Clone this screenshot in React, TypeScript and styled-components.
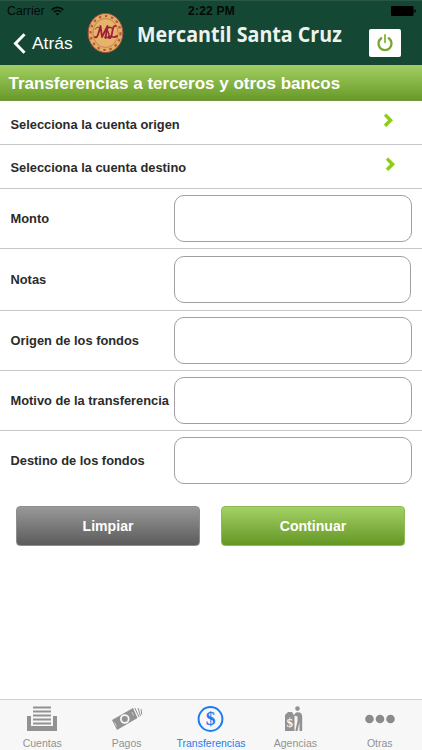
import React from 'react';
import styled, { createGlobalStyle } from 'styled-components';

const Global = createGlobalStyle`
  * { box-sizing: border-box; }
  html, body { margin: 0; padding: 0; background: #fff; }
  body { font-family: "Liberation Sans", Arial, sans-serif; color: #2b2b2b; }
  svg { display: block; flex: none; }
  button, input { font-family: inherit; margin: 0; }
`;

const Screen = styled.div`
  width: 422px;
  height: 750px;
  display: flex;
  flex-direction: column;
  overflow: hidden;
  background: #fff;
`;

const Header = styled.header`
  height: 65px;
  background: #144734;
  border-top: 1px solid #2a5646;
  flex: none;
`;

const StatusBar = styled.div`
  height: 20px;
  display: grid;
  grid-template-columns: 1fr auto 1fr;
  align-items: center;
  padding: 0 6px 0 7px;
  color: #030907;
  font-size: 12.3px;
  line-height: 20px;
`;

const Carrier = styled.div`
  display: flex;
  align-items: center;
  gap: 6px;
`;

const Clock = styled.div`
  font-weight: 700;
  font-size: 12px;
  letter-spacing: 0.2px;
`;

const BatterySlot = styled.div`
  justify-self: end;
`;

const NavBar = styled.div`
  height: 44px;
  display: flex;
  align-items: center;
  padding-left: 13px;
`;

const BackButton = styled.button`
  display: flex;
  align-items: center;
  gap: 6px;
  width: 74px;
  padding: 0;
  border: 0;
  background: none;
  color: #fff;
  font-size: 17.4px;
  line-height: 22px;
`;

const Brand = styled.div`
  display: flex;
  align-items: center;
  width: 282px;
  gap: 12px;
  margin-top: -20px;
`;

const BrandName = styled.div`
  font-family: "Open Sans", "Noto Sans", sans-serif;
  font-weight: 700;
  font-size: 22px;
  line-height: 30px;
  color: #eef2ef;
  white-space: nowrap;
  transform: scaleX(0.894);
  transform-origin: 0 50%;
`;

const PowerButton = styled.button`
  width: 32px;
  height: 28px;
  display: grid;
  place-items: center;
  padding: 0;
  border: 0;
  border-radius: 2px;
  background: #fff;
`;

const Title = styled.h1`
  margin: 0;
  height: 36px;
  flex: none;
  padding-left: 8.5px;
  font-size: 17px;
  line-height: 38px;
  font-weight: 700;
  color: #fff;
  white-space: nowrap;
  border-bottom: 1px solid #75963f;
  background: linear-gradient(#a2cf62, #689a29);
`;

const Row = styled.div<{ $h: number; $pad?: number; $last?: boolean }>`
  height: ${(p) => p.$h}px;
  flex: none;
  display: flex;
  align-items: flex-start;
  padding: ${(p) => p.$pad ?? 6}px 10px 0;
  border-bottom: 1px solid ${(p) => (p.$last ? 'transparent' : '#c6c6c6')};
`;

const Label = styled.label<{ $top: number }>`
  width: 164px;
  flex: none;
  padding-top: ${(p) => p.$top}px;
  padding-left: 0.5px;
  font-size: 12.85px;
  line-height: 16px;
  font-weight: 700;
  white-space: nowrap;
`;

const Field = styled.input<{ $w?: number }>`
  width: ${(p) => p.$w ?? 238}px;
  height: 47px;
  flex: none;
  border: 1px solid #a0a0a0;
  border-radius: 10px;
  background: #fff;
  outline: none;
`;

const Chevron = styled.svg<{ $right: number }>`
  margin-left: auto;
  margin-right: ${(p) => p.$right}px;
`;

const Actions = styled.div`
  display: flex;
  gap: 21px;
  padding: 15px 16px 0;
`;

const ActionButton = styled.button<{ $primary?: boolean }>`
  width: 184px;
  height: 40px;
  padding: 0;
  border-radius: 4px;
  border: 1px solid ${(p) => (p.$primary ? '#8dba52' : '#8e8e8e')};
  background: ${(p) =>
    p.$primary ? 'linear-gradient(#a6d268, #629522)' : 'linear-gradient(#9a9a9a, #5a5a5a)'};
  background-origin: border-box;
  color: #fff;
  font-size: 14.1px;
  font-weight: 700;
`;

const TabBar = styled.nav`
  margin-top: auto;
  height: 51px;
  flex: none;
  display: grid;
  grid-template-columns: repeat(5, 1fr);
  border-top: 1px solid #d2d2d2;
  background: #f7f7f7;
`;

const Tab = styled.div<{ $active?: boolean }>`
  display: flex;
  flex-direction: column;
  align-items: center;
  padding-top: 5px;
  gap: 4px;
  color: ${(p) => (p.$active ? '#1b7df0' : '#929292')};
  font-size: 10.5px;
  line-height: 14px;
  white-space: nowrap;
`;

const Seal = () => (
  <svg width="38" height="42" viewBox="0 0 38 42">
    <ellipse cx="18.5" cy="21" rx="17.4" ry="19.6" fill="#e3ad64" stroke="#a24a3c" strokeWidth="1" />
    <ellipse cx="18.5" cy="21" rx="15" ry="17" fill="none" stroke="#b4573f" strokeWidth="2.2" strokeDasharray="2.4 3.8" />
    <ellipse cx="18.5" cy="21" rx="12.6" ry="14.5" fill="#e6b36b" stroke="#bd6c4c" strokeWidth=".7" />
    <g fill="none" stroke="#9b2038" strokeWidth="1.8" strokeLinecap="round" strokeLinejoin="round">
      <path d="M8 25c2 2 3.5-3 5.5-11l1.5 11 5.5-11-2 12" />
      <path d="M24.5 16c-3-2.5-5.5 1-3.5 4s1 7-3 5" strokeWidth="1.5" />
      <path d="M29 14c-4-1-3 6-5 11-1 2-3 1-2 0 2-2 5 2 8-1" />
      <path d="M8.500 17c1.500-3 3.500-2 4.500 0" strokeWidth="1" />
    </g>
  </svg>
);

const WifiIcon = () => (
  <svg width="13" height="10" viewBox="0 0 13 10" fill="none" stroke="#030907" strokeWidth="1.7">
    <path d="M.8 3.8C4 .5 9 .5 12.2 3.8" />
    <path d="M3 6c2-2 5-2 7 0" />
    <path d="M6.5 9.6 4.7 7.7q1.8-1.5 3.600 0z" fill="#030907" stroke="none" />
  </svg>
);

const BatteryIcon = () => (
  <svg width="25" height="10" viewBox="0 0 25 10">
    <rect width="22.500" height="10" rx="1" />
    <path d="M23.300 3.300q1.500.2 1.500 1.700t-1.500 1.700z" />
  </svg>
);

const PowerIcon = () => (
  <svg width="18" height="20" viewBox="0 0 18 20" fill="none" stroke="#78a62f" strokeLinecap="round">
    <path d="M5.2 5.3a6.5 6.5 0 1 0 7.6 0" strokeWidth="2.3" />
    <path d="M9 2v7.2" strokeWidth="2" stroke="#8ebd48" />
  </svg>
);

const Arrow = ({ right }: { right: number }) => (
  <Chevron $right={right} width="11" height="15" viewBox="0 0 11 15">
    <path d="M2 1.600 7.600 7.200 2 12.800" fill="none" stroke="#8dcc17" strokeWidth="3.400" />
  </Chevron>
);

const AccountsIcon = () => (
  <svg width="30" height="27" viewBox="0 0 30 27" fill="#929292">
    <path d="M0 11h4v10h22V11h4v15H0z" />
    <path d="M6 1.500h18v2H6zM6 5.500h18v2H6zM6 9.500h18v2H6zM6 13.500h18v2H6zM6 17.500h18v2H6z" />
  </svg>
);

const PaymentsIcon = () => (
  <svg width="32" height="27" viewBox="0 0 32 27">
    <path d="M1 15 22 3l4.500 10L6 25z" fill="#929292" />
    <path d="m3.500 17.500 2 4M21 7l1.500 3.500" stroke="#d0d0d0" strokeWidth="1" />
    <circle cx="13.800" cy="14" r="3.900" fill="#929292" stroke="#f7f7f7" strokeWidth="1.800" />
    <path d="m23.800 3 4.200 9M27 3l2.500 8M30 4l.8 5.500" stroke="#929292" strokeWidth="1" fill="none" />
  </svg>
);

const Glyph = styled.text`
  font-family: "Liberation Serif", serif;
  font-weight: 700;
  text-anchor: middle;
`;

const TransfersIcon = () => (
  <svg width="28" height="27" viewBox="0 0 28 27">
    <circle cx="13.500" cy="14" r="11.900" fill="none" stroke="#1b7df0" strokeWidth="2" />
    <Glyph x="13.500" y="20.300" fontSize="19.500" fill="#1b7df0">$</Glyph>
  </svg>
);

const BranchesIcon = () => (
  <svg width="22" height="27" viewBox="0 0 22 27">
    <path d="M1 26V10l3-3h4l2.500 4v15z" fill="#929292" />
    <Glyph x="5.800" y="22.200" fontSize="13" fill="#f7f7f7">$</Glyph>
    <circle cx="13.500" cy="3.600" r="2.300" fill="#929292" />
    <path d="M12 7.500q6-1 6.200 4V26h-2.700v-9l-2 9h-2.200l2.200-10V11.500l-4-1z" fill="#929292" />
  </svg>
);

const MoreIcon = () => (
  <svg width="30" height="27" viewBox="0 0 30 27" fill="#8b8b8b">
    <circle cx="4.500" cy="14" r="4.300" />
    <circle cx="15" cy="14" r="4.300" />
    <circle cx="25.500" cy="14" r="4.300" />
  </svg>
);

const fields = [
  { id: 'monto', label: 'Monto', h: 60, pad: 6, top: 16, w: 238 },
  { id: 'notas', label: 'Notas', h: 62, pad: 7, top: 16, w: 237 },
  { id: 'origen', label: 'Origen de los fondos', h: 60, pad: 6, top: 16, w: 238 },
  { id: 'motivo', label: 'Motivo de la transferencia', h: 60, pad: 6, top: 16, w: 238 },
  { id: 'destino', label: 'Destino de los fondos', h: 60, pad: 6, top: 16, w: 238 },
];

export default function App() {
  return (
    <Screen>
      <Global />
      <Header>
        <StatusBar>
          <Carrier>Carrier <WifiIcon /></Carrier>
          <Clock>2:22 PM</Clock>
          <BatterySlot><BatteryIcon /></BatterySlot>
        </StatusBar>
        <NavBar>
          <BackButton>
            <svg width="13" height="21" viewBox="0 0 13 21">
              <path d="M11.500 1.300 2.500 10.500l9 9.200" fill="none" stroke="#fff" strokeWidth="3" />
            </svg>
            Atrás
          </BackButton>
          <Brand>
            <Seal />
            <BrandName>Mercantil Santa Cruz</BrandName>
          </Brand>
          <PowerButton aria-label="Salir"><PowerIcon /></PowerButton>
        </NavBar>
      </Header>
      <Title>Transferencias a terceros y otros bancos</Title>
      <Row $h={44} $pad={12}>
        <Label as="div" $top={4}>Selecciona la cuenta origen</Label>
        <Arrow right={18} />
      </Row>
      <Row $h={44} $pad={12}>
        <Label as="div" $top={3}>Selecciona la cuenta destino</Label>
        <Arrow right={16} />
      </Row>
      {fields.map((f, i) => (
        <Row key={f.id} $h={f.h} $pad={f.pad} $last={i === fields.length - 1}>
          <Label htmlFor={f.id} $top={f.top}>{f.label}</Label>
          <Field id={f.id} $w={f.w} />
        </Row>
      ))}
      <Actions>
        <ActionButton>Limpiar</ActionButton>
        <ActionButton $primary>Continuar</ActionButton>
      </Actions>
      <TabBar>
        <Tab><AccountsIcon />Cuentas</Tab>
        <Tab><PaymentsIcon />Pagos</Tab>
        <Tab $active><TransfersIcon />Transferencias</Tab>
        <Tab><BranchesIcon />Agencias</Tab>
        <Tab><MoreIcon />Otras</Tab>
      </TabBar>
    </Screen>
  );
}
